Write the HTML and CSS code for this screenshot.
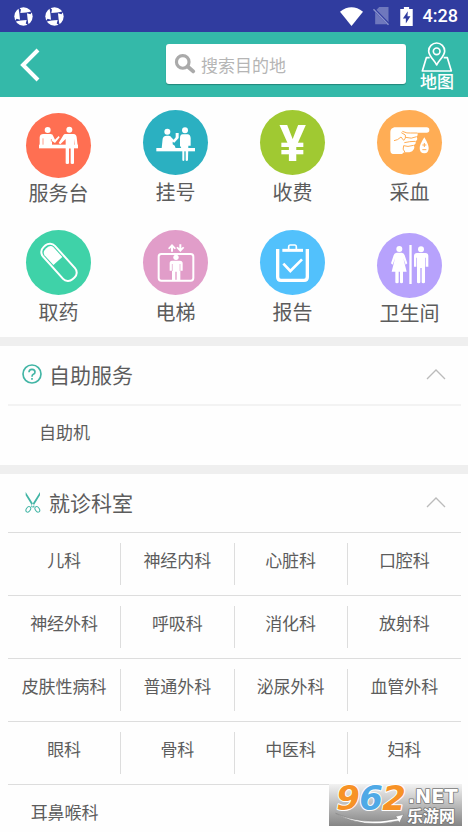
FILE: index.html
```html
<!DOCTYPE html>
<html lang="zh-CN">
<head>
<meta charset="utf-8">
<meta name="viewport" content="width=device-width, initial-scale=1">
<title>医院导航</title>
<link rel="stylesheet" href="styles.css">
</head>
<body>
<div class="status">
  <div class="status-group">
    <svg class="swirl" viewBox="0 0 60 60" aria-hidden="true"><circle cx="30" cy="30" r="29" fill="#fff"/><path d="M14 0L22 8L20 19L39 17L51 15L60 12L52 23L41 20L43 39L45 51L48 60L37 52L40 41L21 43L9 45L0 48L8 37L19 40L17 21L15 9Z" fill="#303c9f"/></svg>
    <svg class="swirl" viewBox="0 0 60 60" aria-hidden="true"><circle cx="30" cy="30" r="29" fill="#fff"/><path d="M14 0L22 8L20 19L39 17L51 15L60 12L52 23L41 20L43 39L45 51L48 60L37 52L40 41L21 43L9 45L0 48L8 37L19 40L17 21L15 9Z" fill="#303c9f"/></svg>
  </div>
  <div class="status-group">
    <svg class="wifi" viewBox="0 0 68 56" aria-hidden="true"><path d="M0 14Q34-12 68 14L34 56Z" fill="#fff"/></svg>
    <svg class="sim" viewBox="0 0 50 54" aria-hidden="true"><path d="M18 0H46V52H6V13Z" fill="#6f78bd"/><path d="M0 4L48 53" stroke="#303c9f" stroke-width="8"/><path d="M1 7L46 53" stroke="#8b93cc" stroke-width="4"/></svg>
    <svg class="battery" viewBox="0 0 38 58" aria-hidden="true"><path d="M11 0H27V6H38V58H0V6H11Z" fill="#fff"/><path d="M23 13L8 35H17V50L31 28H22Z" fill="#303c9f"/></svg>
    <span class="clock">4:28</span>
  </div>
</div>

<header class="topbar">
  <button class="back" type="button" aria-label="返回"><svg viewBox="0 0 20 34" aria-hidden="true"><path d="M18 2L3 17L18 32" fill="none" stroke="#fff" stroke-width="4"/></svg></button>
  <label class="search">
    <svg viewBox="0 0 60 56" aria-hidden="true"><circle cx="25" cy="22" r="18" fill="none" stroke="#aaa" stroke-width="9"/><path d="M39 35L55 49" stroke="#aaa" stroke-width="11" stroke-linecap="round"/></svg>
    <input type="text" placeholder="搜索目的地" aria-label="搜索目的地">
  </label>
  <a class="map" href="#">
    <svg viewBox="0 0 94 90" aria-hidden="true"><g fill="none" stroke="#fff" stroke-width="5" stroke-linejoin="round"><path d="M46 69C41 56 22 43 22 27A24 24 0 0 1 70 27C70 43 51 56 46 69Z"/><circle cx="46" cy="28" r="10"/><path d="M25 47H15L3 87H90L78 47H67"/></g></svg>
    <span>地图</span>
  </a>
</header>

<main>
  <nav class="services">
    <a class="service service-long" href="#">
      <svg viewBox="0 0 195 195" aria-hidden="true"><circle cx="97.500" cy="97.500" r="97.500" fill="#ff6f52"/><g fill="#fff"><circle cx="65" cy="51" r="9"/><path d="M41 96V73Q42 63 52 63H74Q80 63 82 70L87 80L98 69L101 73L87 90L78 84V96Z"/><rect x="39" y="95" width="117" height="11"/><circle cx="130" cy="50" r="9"/><path d="M118 63H143Q151 64 152 73L155 98H146L144 77V151Q144 153 139 153Q134 153 134 151V106H129V151Q129 153 124 153Q119 153 119 151V78L103 94L98 90L112 67Q114 63 118 63Z"/></g><path d="M51 76V95M76 78V86" stroke="#ff6f52" stroke-width="2"/></svg>
      <span>服务台</span>
    </a>
    <a class="service" href="#">
      <svg viewBox="0 0 195 195" aria-hidden="true"><circle cx="97.500" cy="97.500" r="97.500" fill="#2bb0c1"/><g fill="#fff"><circle cx="73" cy="65" r="9"/><path d="M56 115L59 86Q61 77 71 77H77Q83 77 86 83L92 89L98 82V69H107V84L94 98L89 95V103Q97 106 98 115Z"/><rect x="40" y="114" width="116" height="10"/><circle cx="126" cy="61" r="9"/><path d="M119 73H134Q142 74 143 84V107H136L135 151Q131 155 128 151V123H124V151Q121 155 118 151V119L111 107V84Q111 74 119 73Z"/></g></svg>
      <span>挂号</span>
    </a>
    <a class="service" href="#">
      <svg viewBox="0 0 195 195" aria-hidden="true"><circle cx="97.500" cy="97.500" r="97.500" fill="#a0c932"/><text class="yen" x="98" y="152" text-anchor="middle" fill="#fff">¥</text></svg>
      <span>收费</span>
    </a>
    <a class="service" href="#">
      <svg viewBox="0 0 195 195" aria-hidden="true"><circle cx="97.500" cy="97.500" r="97.500" fill="#ffad55"/><path d="M52 52H149Q157 52 157 60Q157 68 149 68H121Q124 74 119 80Q124 89 115 94Q119 101 110 106Q115 113 108 121Q104 127 91 127H81L75 132H47Q40 130 40 122V65Q41 55 52 52Z" fill="#fff"/><g fill="none" stroke="#ffad55" stroke-width="3"><path d="M51 92Q62 91 72 81L80 91Q88 85 85 75L73 68M76 64Q91 71 101 69H121M86 82Q103 88 119 80M82 98Q98 94 115 94M80 107Q91 112 110 106M80 107Q75 118 84 127"/></g><path d="M142 82Q155 104 155 114Q155 130 142 130Q128 130 128 114Q128 104 142 82Z" fill="#fff"/><path d="M136 105H148M142 99V111M136 119H148" stroke="#ffad55" stroke-width="3"/></svg>
      <span>采血</span>
    </a>
    <a class="service" href="#">
      <svg viewBox="0 0 195 195" aria-hidden="true"><circle cx="97.500" cy="97.500" r="97.500" fill="#3fd2a8"/><g transform="translate(99 97) rotate(48)"><rect x="-65" y="-24" width="130" height="48" rx="20" fill="none" stroke="#fff" stroke-width="6"/><path d="M-5-18V18H-45Q-57 16-57 0Q-57-16-45-18Z" fill="#fff"/></g></svg>
      <span>取药</span>
    </a>
    <a class="service" href="#">
      <svg viewBox="0 0 195 195" aria-hidden="true"><circle cx="97.500" cy="97.500" r="97.500" fill="#e19dc9"/><rect x="47" y="72" width="104" height="80" rx="8" fill="none" stroke="#fff" stroke-width="6"/><g fill="#fff"><circle cx="99" cy="82" r="8"/><path d="M87 92H111Q119 92 119 100V122H112V150H101V125H97V150H87V122H80V100Q80 92 87 92Z"/><path d="M87 42L99 55L95 58L90 53V65H84V53L79 58L75 55Z"/><path d="M112 66L100 53L104 50L109 55V43H115V55L120 50L124 53Z"/></g><path d="M88 102V123M111 102V123" stroke="#e19dc9" stroke-width="2"/></svg>
      <span>电梯</span>
    </a>
    <a class="service" href="#">
      <svg viewBox="0 0 195 195" aria-hidden="true"><circle cx="97.500" cy="97.500" r="97.500" fill="#52c1fc"/><g fill="none" stroke="#fff"><path d="M53 57V141Q53 151 63 151H132Q142 151 142 141V57" stroke-width="10"/><path d="M67 61H129" stroke-width="9"/><path d="M86 58V50Q86 45 90 45H105Q109 45 109 50V58" stroke-width="5"/><path d="M70 101L91 123L126 88" stroke-width="8"/></g></svg>
      <span>报告</span>
    </a>
    <a class="service service-long" href="#">
      <svg viewBox="0 0 195 195" aria-hidden="true"><circle cx="97.500" cy="97.500" r="97.500" fill="#b7a2fc"/><g fill="#fff"><circle cx="67" cy="48" r="9"/><path d="M59 59H74Q81 59 83 67L91 91L86 95L79 76L89 116H78V148Q78 151 73 151Q69 151 69 148V116H65V148Q65 151 60 151Q55 151 55 148V116H44L54 76L47 95L42 91L50 67Q52 59 59 59Z"/><rect x="97" y="36" width="7" height="117"/><circle cx="132" cy="49" r="9"/><path d="M120 60H145Q154 60 154 69V101H146V74H144V148Q144 151 139 151Q134 151 134 148V105H130V148Q130 151 125 151Q120 151 120 148V74H118V101H111V69Q111 60 120 60Z"/></g></svg>
      <span>卫生间</span>
    </a>
  </nav>

  <section class="panel">
    <div class="panel-head">
      <svg class="panel-icon" viewBox="0 0 60 60" aria-hidden="true"><g fill="none" stroke="#42b5a5" stroke-width="5"><circle cx="30" cy="30" r="27"/><path d="M21 25Q21 16 30 16Q39 16 39 24Q39 29 34 31Q30 33 30 38"/><path d="M30 42V47"/></g></svg>
      <h2>自助服务</h2>
      <button class="fold" type="button" aria-label="收起自助服务"><svg viewBox="0 0 20 12" aria-hidden="true"><path d="M1 11L10 2L19 11" fill="none" stroke="#bbb" stroke-width="1.300"/></svg></button>
    </div>
    <div class="single"><a href="#">自助机</a></div>
  </section>

  <section class="panel">
    <div class="panel-head">
      <svg class="panel-icon" viewBox="0 0 60 60" aria-hidden="true"><path d="M11 0L38 43L34 47L11 10ZM54 0L27 43L31 47L54 10Z" fill="#42b5a5"/><g fill="none" stroke="#42b5a5" stroke-width="3"><ellipse cx="19" cy="52" rx="6" ry="9" transform="rotate(35 19 52)"/><ellipse cx="46" cy="52" rx="6" ry="9" transform="rotate(-35 46 52)"/></g></svg>
      <h2>就诊科室</h2>
      <button class="fold" type="button" aria-label="收起就诊科室"><svg viewBox="0 0 20 12" aria-hidden="true"><path d="M1 11L10 2L19 11" fill="none" stroke="#bbb" stroke-width="1.300"/></svg></button>
    </div>
    <ul class="departments">
      <li><a href="#">儿科</a></li><li><a href="#">神经内科</a></li><li><a href="#">心脏科</a></li><li><a href="#">口腔科</a></li>
      <li><a href="#">神经外科</a></li><li><a href="#">呼吸科</a></li><li><a href="#">消化科</a></li><li><a href="#">放射科</a></li>
      <li><a href="#">皮肤性病科</a></li><li><a href="#">普通外科</a></li><li><a href="#">泌尿外科</a></li><li><a href="#">血管外科</a></li>
      <li><a href="#">眼科</a></li><li><a href="#">骨科</a></li><li><a href="#">中医科</a></li><li><a href="#">妇科</a></li>
      <li><a href="#">耳鼻喉科</a></li>
    </ul>
  </section>
</main>

<div class="badge">
  <svg viewBox="0 0 399 126" role="img" aria-label="962.NET 乐游网">
    <path d="M20 88Q100 126 205 104L200 97L224 91L211 117L208 111Q100 136 20 88Z" fill="#fff" stroke="#888" stroke-width="2"/>
    <g class="badge-number"><text x="22" y="78" fill="#f79226">9</text><text x="91" y="78" fill="#4fa9e6">6</text><text x="160" y="78" fill="#f79226">2</text></g>
    <text class="badge-net" x="236" y="58">.NET</text>
    <text class="badge-name" x="234" y="114">乐游网</text>
  </svg>
</div>
</body>
</html>
```
FILE: styles.css
```css
* {
  box-sizing: border-box;
}

body {
  margin: 0;
  position: relative;
  min-height: 100vh;
  background: #fefefe;
  color: #5c5c5c;
  font-family: Roboto, "Noto Sans CJK SC", sans-serif;
  font-size: 17px;
  line-height: 24px;
}

a {
  color: inherit;
  text-decoration: none;
}

button {
  padding: 0;
  border: 0;
  background: none;
}

svg {
  display: block;
  flex: none;
  overflow: visible;
}

.status {
  display: flex;
  justify-content: space-between;
  height: 32px;
  padding: 0 10px 0 14px;
  background: #303c9f;
}

.status-group {
  display: flex;
  align-items: center;
  gap: 10px;
}

.status-group:first-child {
  gap: 12px;
}

.swirl {
  width: 19px;
  height: 19px;
}

.wifi {
  width: 23px;
  height: 19px;
}

.sim {
  width: 17px;
  height: 18px;
}

.battery {
  width: 13px;
  height: 19px;
}

.clock {
  color: #fff;
  font-size: 18px;
  font-weight: 500;
}

.topbar {
  display: flex;
  align-items: center;
  height: 65px;
  padding: 0 14px 0 20px;
  background: #34b9a9;
}

.back svg {
  width: 20px;
  height: 34px;
}

.search {
  display: flex;
  align-items: center;
  flex: 1;
  gap: 6px;
  min-width: 0;
  height: 40px;
  margin: 0 14px 2px 126px;
  padding: 0 8px;
  border-radius: 3px;
  background: #fff;
  box-shadow: 0 1px 1px #23877a;
}

.search svg {
  width: 21px;
  height: 20px;
}

.search input {
  flex: 1;
  min-width: 0;
  height: 32px;
  margin-top: 4px;
  padding: 0;
  border: 0;
  outline: 0;
  background: none;
  color: #5c5c5c;
  font: inherit;
}

.search input::placeholder {
  color: #b5b5b5;
  opacity: 1;
}

.map {
  display: flex;
  flex: none;
  flex-direction: column;
  align-items: center;
  padding-top: 4px;
  color: #fff;
  font-weight: 500;
  line-height: 20px;
}

.map svg {
  width: 32px;
  height: 30px;
}

.services {
  display: grid;
  grid-template-columns: repeat(4, 1fr);
  grid-auto-rows: 120px;
}

.service {
  display: flex;
  flex-direction: column;
  align-items: center;
  gap: 6px;
  padding-top: 13px;
  font-size: 20px;
}

.service-long {
  gap: 4px;
  padding-top: 16px;
}

.service svg {
  width: 65px;
  height: 65px;
}

.yen {
  font-family: Roboto, sans-serif;
  font-size: 150px;
  font-weight: 700;
}

.panel {
  padding: 0 7px 0 8px;
  border-top: 9px solid #efefef;
}

.panel-head {
  display: flex;
  align-items: center;
  gap: 7px;
  height: 58px;
  padding: 0 15px 2px 14px;
}

.panel-icon {
  width: 20px;
  height: 20px;
}

.panel h2 {
  flex: 1;
  margin: 0;
  padding-top: 4px;
  font-size: 21px;
  font-weight: 400;
}

.fold svg {
  width: 20px;
  height: 12px;
}

.single {
  height: 61px;
  padding: 15px 31px;
  border-top: 2px solid #f3f3f3;
}

.departments {
  display: grid;
  grid-template-columns: repeat(4, 1fr);
  margin: 0;
  padding: 0;
  border-top: 1px solid #ddd;
  list-style: none;
}

.departments li {
  padding: 10px 0;
  border-bottom: 1px solid #ddd;
  text-align: center;
}

.departments a {
  display: block;
  height: 42px;
  padding-top: 6px;
  border-right: 1px solid #ddd;
}

.departments li:nth-child(4n) a,
.departments li:last-child a {
  border-right: 0;
}

.departments li:last-child {
  padding-bottom: 0;
  border-bottom: 0;
}

.departments li:last-child a {
  height: 36px;
}

.badge {
  position: absolute;
  right: 6px;
  bottom: 6px;
  background: linear-gradient(#f2f2f2, #858585);
}

.badge svg {
  width: 133px;
  height: 42px;
}

.badge text {
  stroke-linejoin: round;
  paint-order: stroke;
}

.badge-number {
  font-family: "DejaVu Sans", sans-serif;
  font-size: 102px;
  font-style: italic;
  font-weight: 700;
  stroke: #fff;
  stroke-width: 6px;
}

.badge-net {
  fill: #fff;
  stroke: #777;
  stroke-width: 5px;
  font-family: "DejaVu Sans", sans-serif;
  font-size: 58px;
  font-weight: 700;
}

.badge-name {
  fill: #fff;
  stroke: #777;
  stroke-width: 5px;
  font-family: "Noto Sans CJK SC", sans-serif;
  font-size: 48px;
  font-weight: 700;
}
```
